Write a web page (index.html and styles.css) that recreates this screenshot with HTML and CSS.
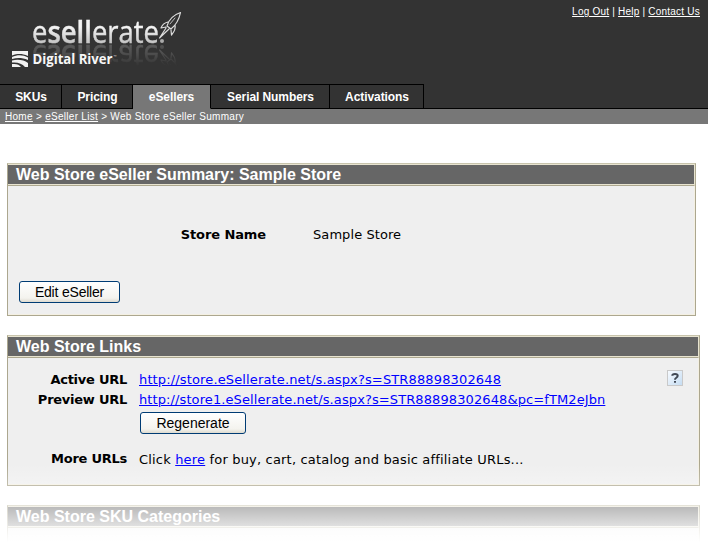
FILE: index.html
```html
<!DOCTYPE html>
<html lang="en">
<head>
<meta charset="utf-8">
<title>Web Store eSeller Summary</title>
<link rel="stylesheet" href="styles.css">
</head>
<body>
<header class="header">
  <div class="masthead">
    <div class="logo">
    <svg class="wordmark" width="190" height="44" viewBox="0 0 190 44">
      <defs>
        <linearGradient id="silver" gradientUnits="userSpaceOnUse" x1="0" y1="20" x2="0" y2="43"><stop offset="0.3" stop-color="#f4f4f4"/><stop offset="1" stop-color="#c4c4c4"/></linearGradient>
      </defs>
      <text x="32" y="42.5" fill="url(#silver)" stroke="url(#silver)" stroke-width=".4" textLength="127" lengthAdjust="spacingAndGlyphs">e<tspan class="heavy">sell</tspan>erate</text>
      <circle cx="162" cy="41" r="2" fill="#aaa"/>
      <g fill="none" stroke="#ddd" stroke-width="1.2" stroke-linejoin="round" stroke-linecap="round">
        <path d="M180.500 12.500C173 15 169 19 167 26L171 29C176 25 179 20 180.500 12.500ZM168 22C164 23 162 25 161 28L166 27M175 25C176 29 174 32 171.500 35L171 30M166 28L159.500 38L169 29"/>
        <path d="M170 24L175 18" stroke-width=".8"/>
      </g>
    </svg>
    <svg class="parent" width="190" height="36" viewBox="0 44 190 36">
      <path fill="#f2f2f2" d="M12 51H28V56C22 53.500 18 53.500 12 55.500ZM12 57C18 54.500 23 55 28 57.500V60C22 57.500 17 57.500 12 59ZM12 60.500C18 59 24 60 28 63V67H25C22 63.500 18 62 12 62.500ZM12 64C17 63.500 19 64.500 21 67H12Z"/>
      <text class="brand" x="32.500" y="64" fill="#f7f7f7" textLength="80" lengthAdjust="spacingAndGlyphs">Digital River</text>
      <text class="mark" x="113.500" y="58" fill="#ccc">™</text>
    </svg>
    </div>
    <nav class="utility"><a href="#">Log Out</a> | <a href="#">Help</a> | <a href="#">Contact Us</a></nav>
  </div>
  <nav class="tabs">
    <a class="tab tab-skus">SKUs</a>
    <a class="tab tab-pricing">Pricing</a>
    <a class="tab tab-esellers active">eSellers</a>
    <a class="tab tab-serials">Serial Numbers</a>
    <a class="tab tab-activations">Activations</a>
  </nav>
</header>
<div class="crumbs"><a href="#">Home</a> &gt; <a href="#">eSeller List</a> &gt; Web Store eSeller Summary</div>
<main>
  <section class="panel summary">
    <h2>Web Store eSeller Summary: Sample Store</h2>
    <div class="body">
      <div class="field"><b>Store Name</b><span>Sample Store</span></div>
      <button class="edit">Edit eSeller</button>
    </div>
  </section>
  <section class="panel links">
    <h2>Web Store Links</h2>
    <div class="body">
      <div class="row"><b>Active URL</b><a class="active-url" href="#">http://store.eSellerate.net/s.aspx?s=STR88898302648</a>
        <svg class="help" width="16" height="16" viewBox="0 0 16 16"><defs><linearGradient id="hb" x2="1" y2="1"><stop stop-color="#f8fbff"/><stop offset="1" stop-color="#c4dcf2"/></linearGradient></defs><rect x=".5" y=".5" width="15" height="15" fill="url(#hb)" stroke="#c9c9c9"/><path d="M5.300 5.800C5.300 3.300 10.700 3.300 10.700 5.800C10.700 8 8 7.500 8 9.700M8 11V12.800" fill="none" stroke="#414854" stroke-width="2"/></svg>
      </div>
      <div class="row"><b>Preview URL</b><a class="preview-url" href="#">http://store1.eSellerate.net/s.aspx?s=STR88898302648&amp;pc=fTM2eJbn</a></div>
      <button class="regen">Regenerate</button>
      <div class="row more"><b>More URLs</b><span class="more-text">Click <a href="#">here</a> for buy, cart, catalog and basic affiliate URLs...</span></div>
    </div>
  </section>
  <section class="panel categories">
    <h2>Web Store SKU Categories</h2>
    <div class="body"></div>
  </section>
</main>
<div class="fade"></div>
</body>
</html>
```
FILE: styles.css
```css
* { box-sizing: border-box; }
body { margin: 0; height: 550px; overflow: hidden; position: relative; background: #fff; color: #000; font: 13px/20px "DejaVu Sans", sans-serif; }
.header { height: 109px; background: #333; border-bottom: 1px solid #000; }
.masthead { display: flex; justify-content: space-between; height: 84px; }
.logo svg { display: block; overflow: visible; }
.logo .wordmark { font: 31px "Open Sans", sans-serif; -webkit-box-reflect: below 0 linear-gradient(transparent 50%, rgba(0,0,0,.28)); }
.heavy { font-weight: 600; }
.parent { position: relative; }
.brand { font: 700 15px "Open Sans", sans-serif; }
.mark { font: 4px "Open Sans", sans-serif; }
.utility { padding: 6px 8px 0 0; color: #fff; font: 10px/12px "Liberation Sans", sans-serif; letter-spacing: .22px; white-space: nowrap; }
.utility a, .crumbs a { color: #fff; }
.tabs { display: flex; height: 25px; }
.tab { height: 25px; padding-left: 1px; border: solid #000; border-width: 1px 1px 1px 0; color: #fff; font: bold 12px/24px "Liberation Sans", sans-serif; letter-spacing: -.08px; text-align: center; }
.tab-skus { width: 62px; }
.tab-pricing { width: 71px; }
.tab-esellers { width: 78px; padding-left: 0; }
.tab-serials { width: 119px; }
.tab-activations { width: 94px; }
.tab.active { background: #777; border-bottom-color: #777; }
.crumbs { height: 15px; padding-left: 5px; background: #777; color: #fff; font: 10px/15px "Liberation Sans", sans-serif; letter-spacing: .29px; }
main { padding: 39px 0 0 7px; }
.panel { border: 1px solid #aca78f; border-top-color: #c8c4ad; }
.panel h2 { margin: 0; height: 21px; padding-left: 8px; border: solid #e8e4d0; border-width: 1px 1px 1px 0; background: #666; color: #fff; font: bold 16px/20px "Liberation Sans", sans-serif; }
.body { background: #efefef; border: solid #f4f0e2; border-width: 0 1px 1px 0; border-top: 1px solid #aca78f; }
.summary { width: 689px; height: 153px; margin-bottom: 19px; }
.summary .body { height: 130px; padding: 39px 0 0 11px; }
.field { display: flex; height: 56px; }
.field b { width: 247px; text-align: right; margin-right: 47px; letter-spacing: -.1px; }
.field span { letter-spacing: .08px; }
button { display: block; height: 22px; border: 1px solid #003c74; border-radius: 3px; background: linear-gradient(#fff, #f4f3ee 80%, #dedbd0); color: #000; font: 14px/19px "Liberation Sans", sans-serif; padding: 0; }
.edit { width: 101px; letter-spacing: -.2px; }
.links { width: 693px; height: 151px; margin-bottom: 19px; }
.links .body { height: 128px; padding-top: 12px; }
.row { display: flex; height: 20px; white-space: nowrap; }
.row b { width: 119px; text-align: right; margin-right: 12px; letter-spacing: -.25px; }
a { color: #00f; }
.active-url { letter-spacing: .14px; }
.preview-url { letter-spacing: .1px; }
.more-text { letter-spacing: .18px; padding-top: 1px; }
.help { margin: 0 15px 0 auto; }
.regen { width: 106px; margin: 2px 0 0 132px; }
.more { margin-top: 15px; }
.categories { width: 693px; height: 60px; }
.categories .body { height: 37px; }
.fade { position: absolute; left: 0; right: 0; top: 464px; height: 86px; background: linear-gradient(rgba(255,255,255,0), #fff 78px); }
```
